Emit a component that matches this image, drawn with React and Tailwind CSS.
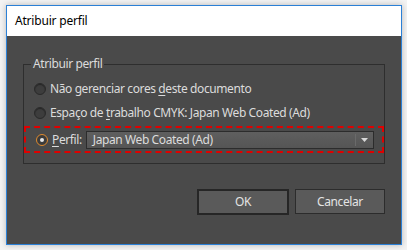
const font = { fontFamily: '"Segoe UI", "Noto Sans", sans-serif' };

function Radio({ checked }) {
  return (
    <span
      className={`flex items-center justify-center w-[12px] h-[12px] rounded-full shrink-0 ${
        checked
          ? 'border-[1.5px] border-[#e08a2e] bg-[#3c3c3c]'
          : 'border border-[#2a2a2a] bg-[#3d3d3d] shadow-[inset_0_1px_1px_rgba(0,0,0,0.4)]'
      }`}
    >
      {checked && <span className="w-[4px] h-[4px] rounded-full bg-[#e8e8e8]" />}
    </span>
  );
}

export default function App() {
  return (
    <div className="w-[407px] h-[250px] bg-[#f3f3f3] pt-[5px] pl-[6px]" style={font}>
      <div className="w-[396px] h-[240px] border border-[#2b80d6] flex flex-col shadow-[0_0_6px_rgba(0,0,0,0.25)]">
        {/* barra de título */}
        <div className="h-[30px] bg-white flex items-center pl-[8px] text-[12px] text-black tracking-[-0.2px]">
          Atribuir perfil
        </div>

        {/* corpo */}
        <div className="flex-1 bg-[#4a4a4a] px-[16px] pt-[28px] text-[12px] tracking-[-0.4px] text-[#dcdcdc]">
          <div className="relative h-[100px] border border-[#2e2e2e] pt-[14px] px-[10px]">
            <span className="absolute -top-[9px] left-[7px] bg-[#4a4a4a] px-[2px] leading-[16px]">
              Atribuir perfil
            </span>

            <div className="flex items-center gap-[4px] h-[20px]">
              <Radio />
              <span>Não gerenciar cores <u className="decoration-1 underline-offset-2">d</u>este documento</span>
            </div>
            <div className="flex items-center gap-[4px] h-[20px] mt-[4px]">
              <Radio />
              <span>Espaço de <u className="decoration-1 underline-offset-2">t</u>rabalho CMYK: Japan Web Coated (Ad)</span>
            </div>

            <div className="flex items-center gap-[4px] h-[27px] mt-[3px] -mx-[10px] px-[10px] border-2 border-dashed border-[#e00000]">
              <Radio checked />
              <span><u className="decoration-1 underline-offset-2">P</u>erfil:</span>
              <div className="flex-1 h-[18px] flex items-center border border-[#2c2c2c] bg-gradient-to-b from-[#5f5f5f] to-[#555555] pl-[6px] mr-[-2px]">
                <span className="flex-1">Japan Web Coated (Ad)</span>
                <span className="w-px h-[12px] bg-[#3a3a3a] border-r border-[#6a6a6a]" />
                <span className="w-[17px] flex items-center justify-center">
                  <svg width="7" height="4" viewBox="0 0 7 4"><path d="M0 0h7L3.5 4z" fill="#d8d8d8" /></svg>
                </span>
              </div>
            </div>
          </div>

          <div className="flex justify-end gap-[6px] mt-[25px]">
            <button className="w-[92px] h-[26px] border-2 border-[#262626] bg-[#5a5a5a] text-[#e4e4e4] text-[12px]">
              OK
            </button>
            <button className="w-[90px] h-[25px] border border-[#2c2c2c] bg-[#5a5a5a] text-[#e4e4e4] text-[12px]">
              Cancelar
            </button>
          </div>
        </div>
      </div>
    </div>
  );
}
